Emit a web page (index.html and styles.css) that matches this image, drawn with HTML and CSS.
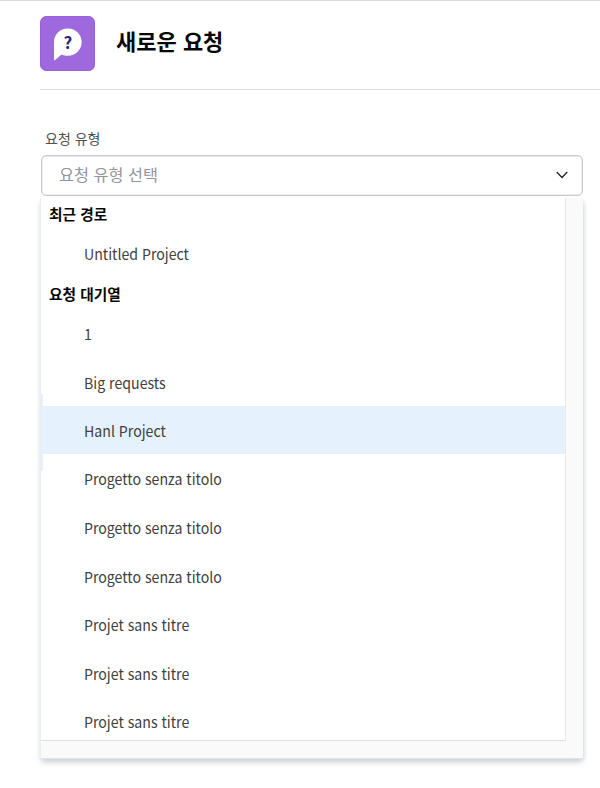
FILE: index.html
```html
<!DOCTYPE html>
<html lang="ko">
<head>
<meta charset="utf-8">
<title>새로운 요청</title>
<link rel="stylesheet" href="styles.css">
</head>
<body>
<header class="header">
  <div class="logo">
    <svg width="55" height="55" viewBox="0 0 55 55">
      <path d="M14 44V26C14 18.400 20 12.500 27.800 12.500S41.700 18.600 41.700 26.200 35.500 39.700 27.800 39.700C25.500 39.700 23.500 39.400 21.500 38.400L15.500 43.800Q14.400 44.700 14 44Z" fill="#fff"/>
      <text class="mark" x="28" y="32.500" text-anchor="middle">?</text>
    </svg>
  </div>
  <h1 class="title">새로운 요청</h1>
</header>
<main class="form">
  <div class="label">요청 유형</div>
  <div class="select">
    <span class="placeholder">요청 유형 선택</span>
    <svg class="chevron" width="14" height="10" viewBox="0 0 14 10"><path d="M1.700 2L7 7.500L12.300 2" fill="none" stroke="#20242e" stroke-width="1.300"/></svg>
  </div>
  <div class="menu">
    <div class="list">
      <div class="group">최근 경로</div>
      <div class="item recent"><span>Untitled Project</span></div>
      <div class="group">요청 대기열</div>
      <div class="item first"><span>1</span></div>
      <div class="item second"><span>Big requests</span></div>
      <div class="item active"><span>Hanl Project</span></div>
      <div class="item"><span>Progetto senza titolo</span></div>
      <div class="item"><span>Progetto senza titolo</span></div>
      <div class="item"><span>Progetto senza titolo</span></div>
      <div class="item"><span>Projet sans titre</span></div>
      <div class="item"><span>Projet sans titre</span></div>
      <div class="item"><span>Projet sans titre</span></div>
    </div>
  </div>
</main>
</body>
</html>
```
FILE: styles.css
```css
* { box-sizing: border-box; }
body {
  margin: 0;
  height: 788px;
  overflow: hidden;
  border-top: 1px solid #d8d8dc;
  background: #fff;
  color: #404040;
  font-family: "Noto Sans CJK KR", sans-serif;
}
.header {
  display: flex;
  height: 89px;
  margin-left: 40px;
  padding-top: 15px;
  border-bottom: 1px solid #dedede;
}
.logo {
  width: 55px;
  height: 55px;
  border-radius: 7px;
  background: #9d69dc;
  box-shadow: inset 0 0 0 1px #9860dc;
}
.logo svg { display: block; }
.mark { font-size: 17px; font-weight: 700; fill: #242478; }
.title {
  margin: 0 0 0 21px;
  height: 52px;
  line-height: 48px;
  font-size: 22px;
  font-weight: 700;
  color: #080808;
  white-space: nowrap;
}
.form { width: 543px; margin-left: 40px; }
.label {
  height: 65px;
  padding: 38px 0 0 5px;
  font-size: 14px;
  line-height: 20px;
  color: #505050;
}
.select {
  display: flex;
  align-items: center;
  justify-content: space-between;
  height: 41px;
  margin-left: 1px;
  padding: 0 13px 1px 17px;
  border: 1px solid #c9c9cf;
  border-radius: 5px;
  box-shadow: inset 0 0 0 .5px #dcdce0;
}
.placeholder {
  padding-bottom: 3px;
  font-size: 16.300px;
  line-height: 34px;
  color: #92969c;
}
.menu {
  height: 561px;
  margin-top: 2px;
  padding-right: 17px;
  border-left: 1px solid #ededee;
  border-bottom: 1px solid #e2e3e4;
  background: #fafafa;
  box-shadow: 0 4px 6px -1px #cbd1d7, 2px 2px 4px -1px #e2e5e7;
}
.list {
  height: 543px;
  border-right: 1px solid #e9e9e9;
  border-bottom: 1px solid #dfdfdf;
  background: #fff;
}
.group {
  height: 32px;
  padding-left: 8px;
  line-height: 31px;
  font-size: 14.700px;
  font-weight: 700;
  color: #080808;
}
.item {
  height: 48.600px;
  padding-left: 42.500px;
  line-height: 50px;
  font-size: 15px;
}
.item span {
  display: inline-block;
  transform: scaleX(.943);
  transform-origin: 0 50%;
}
.item.recent,
.item.first { height: 48px; line-height: 48px; }
.item.second { height: 47.800px; line-height: 49px; }
/* Selection marker runs along the menu edge past the highlighted row. */
.item.active { position: relative; line-height: 49px; background: #e5f1fd; }
.item.active::before {
  content: "";
  position: absolute;
  left: 0;
  top: -12px;
  width: 2px;
  height: 77px;
  background: #e5f1fd;
}
```
